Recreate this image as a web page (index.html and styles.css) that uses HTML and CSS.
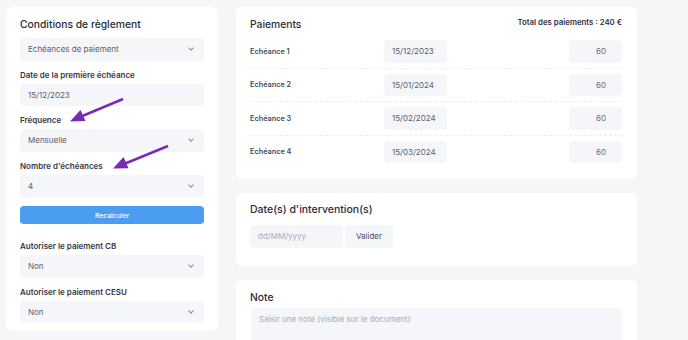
FILE: index.html
```html
<!DOCTYPE html>
<html lang="fr">
<head>
    <meta charset="UTF-8">
    <meta name="viewport" content="width=device-width, initial-scale=1.0">
    <title>Conditions de règlement</title>
    <link rel="stylesheet" href="styles.css">
</head>
<body>
    <div class="page">
        <div class="card left">
            <h2 class="card-title">Conditions de règlement</h2>
            <div class="field select">Echéances de paiement <span class="chevron"></span></div>

            <div class="group">
                <label>Date de la première échéance</label>
                <div class="field">15/12/2023</div>
            </div>
            <div class="group">
                <label>Fréquence</label>
                <div class="field select">Mensuelle <span class="chevron"></span></div>
            </div>
            <div class="group">
                <label>Nombre d'échéances</label>
                <div class="field select">4 <span class="chevron"></span></div>
            </div>

            <button class="btn-blue">Recalculer</button>

            <div class="group spaced">
                <label>Autoriser le paiement CB</label>
                <div class="field select">Non <span class="chevron"></span></div>
            </div>
            <div class="group">
                <label>Autoriser le paiement CESU</label>
                <div class="field select">Non <span class="chevron"></span></div>
            </div>
        </div>

        <div class="right">
            <div class="card payments">
                <div class="card-head">
                    <h2 class="card-title">Paiements</h2>
                    <span class="total">Total des paiements : 240 €</span>
                </div>
                <div class="row">
                    <span class="row-label">Echéance 1</span>
                    <div class="field">15/12/2023</div>
                    <span></span>
                    <div class="field amount">60</div>
                </div>
                <div class="row">
                    <span class="row-label">Echéance 2</span>
                    <div class="field">15/01/2024</div>
                    <span></span>
                    <div class="field amount">60</div>
                </div>
                <div class="row">
                    <span class="row-label">Echéance 3</span>
                    <div class="field">15/02/2024</div>
                    <span></span>
                    <div class="field amount">60</div>
                </div>
                <div class="row">
                    <span class="row-label">Echéance 4</span>
                    <div class="field">15/03/2024</div>
                    <span></span>
                    <div class="field amount">60</div>
                </div>
            </div>

            <div class="card dates">
                <h2 class="card-title">Date(s) d'intervention(s)</h2>
                <div class="date-line">
                    <div class="field placeholder date-input">dd/MM/yyyy</div>
                    <button class="btn-grey">Valider</button>
                </div>
            </div>

            <div class="card note">
                <h2 class="card-title">Note</h2>
                <div class="field placeholder note-area">Saisir une note (visible sur le document)</div>
            </div>
        </div>
    </div>

    <!-- annotation arrows -->
    <svg class="arrows" width="688" height="340" viewBox="0 0 688 340">
        <line x1="123" y1="99" x2="80" y2="117" />
        <polygon points="70,121.5 85.5,121 80.5,110" />
        <line x1="168" y1="146" x2="124" y2="164" />
        <polygon points="113,168.5 128.5,168.2 123.6,157" />
    </svg>
</body>
</html>
```

FILE: styles.css
```css
*{
    margin: 0;
    padding: 0;
    box-sizing: border-box;
}

body{
    background-color: #f5f6f8;
    font-family: "Inter", "Open Sans", sans-serif;
    color: #2c2e3b;
    position: relative;
    overflow: hidden;
    height: 340px;
}

.page{
    display: grid;
    grid-template-columns: 212px 401px;
    column-gap: 18px;
    padding: 7px 6px;
    align-items: start;
}

.card{
    background-color: #fff;
    border-radius: 6px;
    padding: 10px 14px;
}

.card-title{
    font-size: 10.3px;
    font-weight: 500;
    line-height: 14px;
    color: #2a2c39;
}

.left{
    padding-bottom: 8px;
}
.left .card-title{
    margin-bottom: 7px;
}

.field{
    height: 22.5px;
    background-color: #f5f6f9;
    border-radius: 4px;
    font-size: 8px;
    color: #5a5d6e;
    padding: 0 8px;
    display: flex;
    align-items: center;
    white-space: nowrap;
}

.select{
    justify-content: space-between;
}

.chevron{
    width: 4px;
    height: 4px;
    border-right: 1px solid #8a8c99;
    border-bottom: 1px solid #8a8c99;
    transform: rotate(45deg);
    margin-right: 3px;
    margin-top: -2px;
}

.group{
    margin-top: 9px;
}
.group.spaced{
    margin-top: 17px;
}

label{
    display: block;
    font-size: 8px;
    font-weight: 600;
    line-height: 10px;
    color: #363845;
    margin-bottom: 4px;
}

.btn-blue{
    display: block;
    width: 100%;
    height: 18px;
    margin-top: 9px;
    border: none;
    border-radius: 4px;
    background-color: #4a9df1;
    color: #fff;
    font-family: inherit;
    font-size: 6.8px;
    font-weight: 500;
}

.right{
    display: flex;
    flex-direction: column;
    gap: 14px;
}

.payments{
    padding: 10px 15px 11px 14px;
}

.card-head{
    display: flex;
    justify-content: space-between;
    align-items: flex-start;
    margin-bottom: 4px;
}

.total{
    font-size: 7.8px;
    font-weight: 600;
    line-height: 12px;
    color: #2f3140;
    margin-top: -1px;
}

.row{
    display: grid;
    grid-template-columns: 134px 63px 1fr 53px;
    align-items: center;
    padding: 5px 0;
    border-bottom: 1px dashed #eceef2;
}
.row:last-child{
    border-bottom: none;
}

.row-label{
    font-size: 7.3px;
    font-weight: 600;
    color: #474a58;
}

.amount{
    justify-content: flex-end;
    padding-right: 16px;
    color: #6c6e7e;
}

.dates{
    padding-bottom: 18px;
}
.dates .card-title{
    font-size: 10.5px;
    margin-bottom: 8px;
}

.date-line{
    display: flex;
    gap: 2px;
}

.date-input{
    width: 93px;
}

.placeholder{
    color: #a9abb8;
}

.btn-grey{
    width: 48px;
    height: 22.5px;
    border: none;
    border-radius: 4px;
    background-color: #f5f6f9;
    color: #4a4c5a;
    font-family: inherit;
    font-size: 8px;
}

.note .card-title{
    margin-bottom: 4px;
}

.note-area{
    height: 60px;
    align-items: flex-start;
    padding-top: 6px;
    margin: 0 1px 0 1px;
}

.arrows{
    position: absolute;
    top: 0;
    left: 0;
    pointer-events: none;
}
.arrows line{
    stroke: #7a2bb3;
    stroke-width: 2.5;
}
.arrows polygon{
    fill: #7a2bb3;
}
```
